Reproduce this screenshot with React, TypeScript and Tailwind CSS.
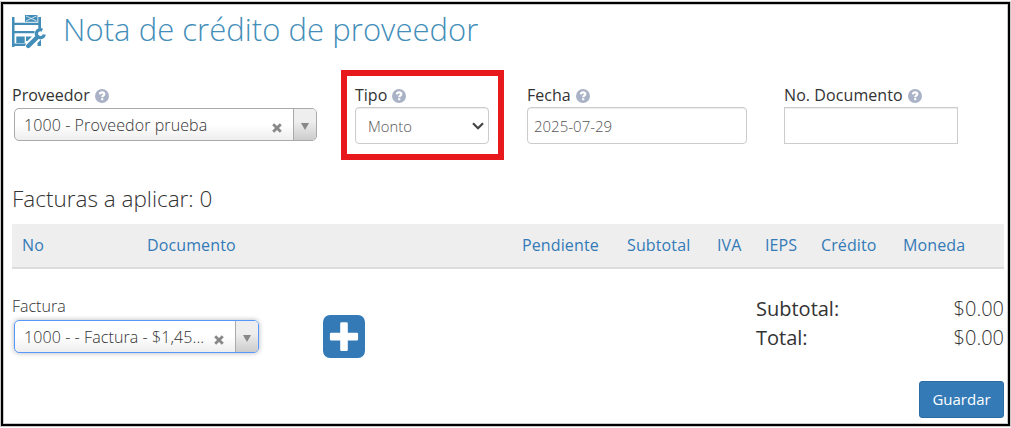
import type { ReactNode } from 'react'

const columns = [
  { label: 'No', width: 'w-[125px]' },
  { label: 'Documento', width: 'w-[375px]' },
  { label: 'Pendiente', width: 'w-[105px]' },
  { label: 'Subtotal', width: 'w-[90px]' },
  { label: 'IVA', width: 'w-[48px]' },
  { label: 'IEPS', width: 'w-[56px]' },
  { label: 'Crédito', width: 'w-[82px]' },
  { label: 'Moneda', width: 'w-[90px]' },
]

function WarehouseIcon() {
  return (
    <svg width="34" height="34" viewBox="0 0 34 34" fill="#438eb9">
      <path d="M0 2h2.5v30H0zM26.3 2H29v11.500h-2.700zM1 7.800h27v2.300H1zM1 16h21.500v2.300H1zM1 28.600h13V31H1z" />
      <path d="M13 0h12.500v6.800H13z" />
      <path d="M14 1l10.500 5M24.500 1L14 6" stroke="#fff" strokeWidth="0.7" />
      <path d="M4.300 21.500h8.400V28H4.300zM14 21.500h6l-4.500 4.500H14zM25.500 28l3.500-3.500V31h-3.500z" />
      {/* Wrench */}
      <path d="M25.500 22L16.300 31" fill="none" stroke="#fff" strokeWidth="6" strokeLinecap="round" />
      <path d="M25.500 22L16.300 31" fill="none" stroke="#438eb9" strokeWidth="4.400" strokeLinecap="round" />
      <path d="M30.300 15.200A4 4 0 1 0 32.300 19.500" fill="none" stroke="#438eb9" strokeWidth="3.300" />
    </svg>
  )
}

function HelpIcon() {
  return (
    <svg width="14" height="14" viewBox="0 0 14 14" className="ml-[5px] mt-px">
      <circle cx="7" cy="7" r="7" fill="#a9b2c6" />
      <path
        d="M4.8 5.3C5 3.9 5.9 3.4 7.1 3.4c1.3 0 2.2.8 2.2 1.8 0 1.5-2.1 1.5-2.1 3"
        fill="none"
        stroke="#fff"
        strokeWidth="2.1"
      />
      <path d="M6.1 9.200h2.200v2H6.100z" fill="#fff" />
    </svg>
  )
}

function Label({ children, help }: { children: ReactNode; help?: boolean }) {
  return (
    <div className="flex h-6 items-center whitespace-nowrap text-[16px] leading-6">
      {children}
      {help && <HelpIcon />}
    </div>
  )
}

function Combo({ text, className, active }: { text: string; className: string; active?: boolean }) {
  return (
    <div
      className={`flex h-[33px] overflow-hidden rounded-[5px] border bg-linear-to-b from-white from-50% to-[#eeeeee] text-[16px] font-light text-[#333] ${
        active ? 'border-[#5897fb] shadow-[0_0_5px_rgba(0,0,0,0.3)]' : 'border-[#aaa]'
      } ${className}`}
    >
      <div className="flex-1 whitespace-nowrap pl-[9px] leading-[32px] tracking-[0.09px]">{text}</div>
      <svg width="10" height="10" viewBox="0 0 10 10" className="mr-[11px] mt-[14px]">
        <path d="M1.2 1.2l7.6 7.6M8.8 1.2L1.2 8.8" stroke="#888" strokeWidth="2.8" />
      </svg>
      <div className="flex w-[23px] justify-center border-l border-[#aaa] bg-linear-to-b from-[#eee] from-40% to-[#ccc] pt-[14px]">
        <svg width="8" height="7" viewBox="0 0 8 7">
          <path d="M0 0h8L4 7z" fill="#888" />
        </svg>
      </div>
    </div>
  )
}

export default function App() {
  return (
    <div className="h-[428px] w-[1011px] overflow-hidden bg-white pl-px pt-[2px] font-['Open_Sans',sans-serif] text-[#333]">
      <div className="h-[424px] w-[1009px] border-2 border-black shadow-[0_0_0_1px_#c8c8c8,inset_0_0_0_1px_#c8c8c8]">
        {/* Title */}
        <div className="flex h-[66px] pl-[9px]">
          <div className="w-[51px] pt-[11px]">
            <WarehouseIcon />
          </div>
          <h1 className="whitespace-nowrap pt-[3px] text-[31px] font-light leading-[44px] tracking-[0.05px] text-[#438eb9]">
            Nota de crédito de proveedor
          </h1>
        </div>

        {/* Form */}
        <div className="flex h-[90px] pl-[9px]">
          <div className="w-[329px] pt-[13px]">
            <Label help>Proveedor</Label>
            <Combo text="1000 - Proveedor prueba" className="ml-[2px] mt-px w-[303px]" />
          </div>
          <div className="h-[90px] w-[163px] border-[6px] border-[#e8191c] pl-[8px] pt-[7px]">
            <Label help>Tipo</Label>
            <div className="flex h-[37px] w-[134px] items-center justify-between rounded-[4px] border border-[#ccc] pl-[12px] pr-[4px] pt-px text-[14.8px] font-light text-[#555] shadow-[inset_0_1px_1px_rgba(0,0,0,0.075)]">
              Monto
              <svg width="12" height="8" viewBox="0 0 12 8" className="mb-px">
                <path d="M1 1.2l5 5 5-5" fill="none" stroke="#444" strokeWidth="2.2" />
              </svg>
            </div>
          </div>
          <div className="ml-[23px] w-[257px] pt-[13px]">
            <Label help>Fecha</Label>
            <div className="h-[37px] w-[220px] rounded-[4px] border border-[#ccc] pl-[6px] text-[15px] font-light leading-[37px] text-[#555] shadow-[inset_0_1px_1px_rgba(0,0,0,0.075)]">
              2025-07-29
            </div>
          </div>
          <div className="pt-[13px]">
            <div className="tracking-[0.08px]">
              <Label help>No. Documento</Label>
            </div>
            <div className="h-[37px] w-[174px] border border-[#ccc] shadow-[inset_0_1px_1px_rgba(0,0,0,0.075)]" />
          </div>
        </div>

        {/* Invoices */}
        <h2 className="h-[64px] pl-[9px] pt-[22px] text-[22.5px] font-light leading-[33px]">Facturas a aplicar: 0</h2>
        <div className="ml-[9px] flex h-[45px] w-[992px] border-b-2 border-[#ddd] bg-[#eee] pl-[10px] text-[16px] leading-[43px] tracking-[0.12px] text-[#337ab7]">
          {columns.map((col) => (
            <div key={col.label} className={`shrink-0 ${col.width}`}>
              {col.label}
            </div>
          ))}
        </div>

        <div className="flex h-[112px] pl-[9px]">
          <div className="w-[311px] pt-[25px] font-light">
            <Label>Factura</Label>
            <Combo text="1000 - - Factura - $1,45..." className="ml-[2px] mt-[2px] w-[245px]" active />
          </div>
          <svg width="42" height="43" viewBox="0 0 42 42" className="mt-[46px]" preserveAspectRatio="none">
            <rect width="42" height="42" rx="7" fill="#337ab7" />
            <path
              d="M18.500 7h5a1.3 1.3 0 0 1 1.3 1.3v9h9a1.3 1.3 0 0 1 1.3 1.3v5a1.3 1.3 0 0 1-1.3 1.3h-9v9a1.3 1.3 0 0 1-1.3 1.3h-5a1.3 1.3 0 0 1-1.3-1.3v-9h-9a1.3 1.3 0 0 1-1.3-1.3v-5a1.3 1.3 0 0 1 1.3-1.3h9v-9A1.3 1.3 0 0 1 18.500 7z"
              fill="#fff"
            />
          </svg>
          <div className="ml-[391px] w-[248px] pt-[25px] text-[20px] leading-[29px]">
            <div className="flex justify-between">
              <span>Subtotal:</span>
              <span className="font-light">$0.00</span>
            </div>
            <div className="flex justify-between">
              <span>Total:</span>
              <span className="font-light">$0.00</span>
            </div>
          </div>
        </div>

        <div className="flex justify-end pr-[4px]">
          <button className="h-[37px] w-[85px] rounded-[3px] border border-[#2e6da4] bg-[#337ab7] text-[15px] leading-[35px] text-white">
            Guardar
          </button>
        </div>
      </div>
    </div>
  )
}
